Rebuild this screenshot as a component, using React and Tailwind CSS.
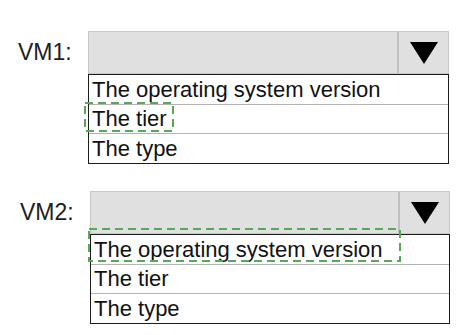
import React from "react";

function Dash({ className, w, h }) {
  return (
    <svg
      className={className}
      width={w}
      height={h}
      viewBox={`0 0 ${w} ${h}`}
      fill="none"
    >
      <rect
        x="1"
        y="1"
        width={w - 2}
        height={h - 2}
        stroke="#55aa55"
        strokeWidth="2"
        strokeDasharray="8 5"
      />
    </svg>
  );
}

function Block({ label, labelClass, boxW, selected }) {
  const items = ["The operating system version", "The tier", "The type"];
  return (
    <div className={`flex ${labelClass}`}>
      <div className="flex h-[42px] w-[70px] items-center text-[23px] leading-none text-[#1e1e1e]">
        {label}
      </div>
      <div className="flex flex-col" style={{ width: boxW }}>
        <div className="flex h-[43px] border border-[#c8c8c8] bg-[#e0e0e0]">
          <div className="flex-1" />
          <div className="flex w-[51px] items-center justify-center border-l-2 border-[#c0c0c0] pt-[1px]">
            <svg width="28" height="22" viewBox="0 0 28 22">
              <polygon points="0,0 28,0 14,22" fill="#000" />
            </svg>
          </div>
        </div>
        <div className="relative border-[1.5px] border-[#1c1c1c] bg-white">
          <div className="h-[30px] border-b border-[#b4b4b4] pl-[3px] text-[22px] leading-[30px] text-[#111]">
            {items[0]}
          </div>
          <div className="h-[29px] border-b border-[#b4b4b4] pl-[3px] text-[22px] leading-[28px] text-[#111]">
            {items[1]}
          </div>
          <div className="h-[29px] pl-[3px] text-[22px] leading-[29px] text-[#111]">
            {items[2]}
          </div>
          {selected === 1 && (
            <Dash className="absolute left-[-5px] top-[27px]" w={90} h={30} />
          )}
          {selected === 0 && (
            <Dash className="absolute left-[-3px] top-[-7px]" w={313} h={34} />
          )}
        </div>
      </div>
    </div>
  );
}

export default function App() {
  return (
    <div
      className="h-[335px] w-[462px] bg-white"
      style={{ fontFamily: '"Liberation Sans", Arial, sans-serif' }}
    >
      <div className="flex flex-col gap-[27px] pt-[31px]">
        <Block label="VM1:" labelClass="pl-[18px]" boxW={361} selected={1} />
        <Block label="VM2:" labelClass="pl-[20px]" boxW={360} selected={0} />
      </div>
    </div>
  );
}
